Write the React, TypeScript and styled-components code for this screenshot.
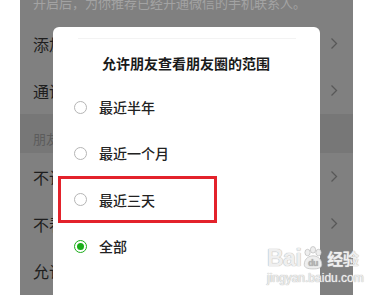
import React from "react";
import styled, { createGlobalStyle } from "styled-components";

const Global = createGlobalStyle`
  html, body { margin: 0; padding: 0; background: #ffffff; }
  body { font-family: "Noto Sans CJK SC", "Noto Sans", sans-serif; overflow: hidden; }
`;

const Page = styled.div`
  position: relative;
  width: 385px;
  height: 295px;
  overflow: hidden;
  background: #ffffff;
`;

const Phone = styled.div`
  position: relative;
  margin: 0 32px 0 20px;
  height: 295px;
  background: #808080;
  overflow: hidden;
`;

const Hint = styled.div`
  height: 27px;
  margin-top: -7px;
  padding-left: 13px;
  font-size: 13px;
  line-height: 20px;
  color: #a3a3a3;
  white-space: nowrap;
  box-sizing: border-box;
`;

const Row = styled.div`
  height: 47px;
  display: flex;
  align-items: center;
  justify-content: space-between;
  padding: 0 15px 0 13px;
  font-size: 16px;
  color: #1e1e1e;
  white-space: nowrap;
`;

const SectionLabel = styled.div`
  height: 39px;
  background: #777777;
  display: flex;
  align-items: flex-end;
  padding: 0 0 5px 13px;
  box-sizing: border-box;
  font-size: 13px;
  color: #5c5c5c;
`;

const Chevron = () => (
  <svg width="8" height="13" viewBox="0 0 8 13">
    <path d="M1.5 1.5 L6.5 6.5 L1.5 11.5" fill="none" stroke="#585858" strokeWidth="1.3" />
  </svg>
);

const Dialog = styled.div`
  position: absolute;
  left: 33px;
  top: 27px;
  width: 267px;
  height: 300px;
  background: #ffffff;
  border-radius: 6px;
  box-sizing: border-box;
  padding-top: 11px;
`;

const FaintBar = styled.div`
  height: 1px;
  margin: 0 24px 0 25px;
  background: #f3f3f3;
`;

const Title = styled.div`
  margin-top: 12px;
  text-align: center;
  font-size: 14px;
  font-weight: 700;
  line-height: 24px;
  color: #1a1a1a;
  padding-right: 1px;
`;

const Options = styled.div`
  margin-top: 9px;
  display: flex;
  flex-direction: column;
`;

const Option = styled.div`
  height: 46px;
  display: flex;
  align-items: center;
  gap: 12px;
  padding-left: 21px;
  font-size: 14px;
  font-weight: 500;
  color: #222222;
`;

const Marked = styled.div`
  margin-left: 5px;
  width: 159px;
  height: 47px;
  box-sizing: border-box;
  border: 3px solid #e3222b;
  display: flex;
  align-items: center;
  gap: 12px;
  padding-left: 13px;
  font-size: 14px;
  font-weight: 500;
  color: #222222;
`;

const Radio = styled.span<{ $checked?: boolean }>`
  width: 13px;
  height: 13px;
  flex: none;
  border-radius: 50%;
  box-sizing: border-box;
  border: 1px solid ${(p) => (p.$checked ? "#1aad19" : "#b5b5b5")};
  display: flex;
  align-items: center;
  justify-content: center;
  &::before {
    content: "";
    width: 7px;
    height: 7px;
    border-radius: 50%;
    background: ${(p) => (p.$checked ? "#1aad19" : "transparent")};
  }
`;

const Watermark = styled.div`
  position: absolute;
  left: 267px;
  top: 245px;
  display: flex;
  flex-direction: column;
  color: #efefef;
  font-family: "Liberation Sans", sans-serif;
  text-shadow: 0 0 1px #b8b8b8, 0 0 1px #b8b8b8;
  pointer-events: none;
`;

const WmTop = styled.div`
  display: flex;
  align-items: center;
  font-size: 23px;
  font-weight: 700;
  line-height: 26px;
  letter-spacing: -0.5px;
`;

const WmCn = styled.span`
  font-family: "Noto Sans CJK SC", sans-serif;
  font-size: 16px;
  margin-left: 2px;
`;

const WmUrl = styled.div`
  font-size: 12px;
  line-height: 14px;
  margin-top: 0;
`;

const Paw = () => (
  <svg width="24" height="24" viewBox="0 0 22 22">
    <g fill="#eeeeee" stroke="#c0c0c0" strokeWidth="0.7">
      <ellipse cx="6" cy="6" rx="2.4" ry="3" />
      <ellipse cx="11" cy="3.5" rx="2.4" ry="3" />
      <ellipse cx="16" cy="6" rx="2.4" ry="3" />
      <path d="M3 17 C3 11 8 9 11 9 C14 9 19 11 19 17 C19 20 16 21 11 21 C6 21 3 20 3 17 Z" />
    </g>
    <text x="11" y="18.5" textAnchor="middle" fontSize="8" fontWeight="700" fill="#b0b0b0" fontFamily="Liberation Sans, sans-serif">du</text>
  </svg>
);

const options = ["最近半年", "最近一个月", "最近三天", "全部"];

export default function App() {
  return (
    <Page>
      <Global />
      <Phone>
        <Hint>开启后，为你推荐已经开通微信的手机联系人。</Hint>
        <Row>
          <span>添加我的方式</span>
          <Chevron />
        </Row>
        <Row>
          <span>通讯录黑名单</span>
          <Chevron />
        </Row>
        <SectionLabel>朋友圈</SectionLabel>
        <Row>
          <span>不让他（她）看我的朋友圈</span>
          <Chevron />
        </Row>
        <Row>
          <span>不看他（她）的朋友圈</span>
          <Chevron />
        </Row>
        <Row>
          <span>允许朋友查看朋友圈的范围</span>
        </Row>
        <Dialog>
          <FaintBar />
          <Title>允许朋友查看朋友圈的范围</Title>
          <Options>
            {options.map((o, i) =>
              i === 2 ? (
                <Marked key={o}>
                  <Radio />
                  <span>{o}</span>
                </Marked>
              ) : (
                <Option key={o}>
                  <Radio $checked={i === 3} />
                  <span>{o}</span>
                </Option>
              )
            )}
          </Options>
        </Dialog>
      </Phone>
      <Watermark>
        <WmTop>
          <span>Bai</span>
          <Paw />
          <WmCn>经验</WmCn>
        </WmTop>
        <WmUrl>jingyan.baidu.com</WmUrl>
      </Watermark>
    </Page>
  );
}
